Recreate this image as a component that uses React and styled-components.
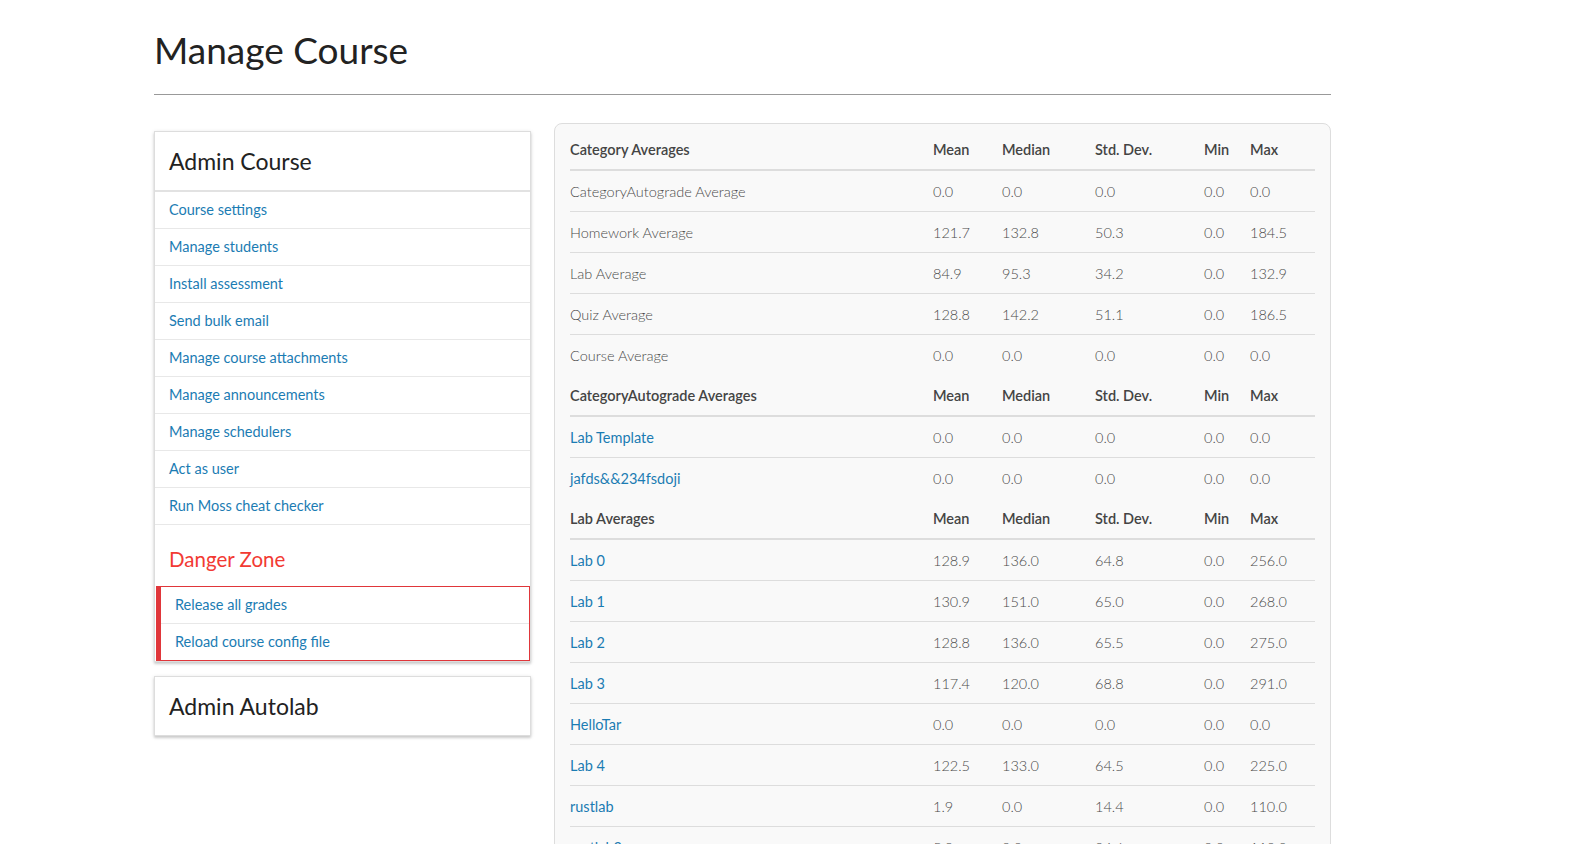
import React from 'react';
import styled, { createGlobalStyle } from 'styled-components';

const GlobalStyle = createGlobalStyle`
  body {
    margin: 0;
    background: #fff;
    font-family: Lato, "Liberation Sans", sans-serif;
    color: #444;
  }
`;

const Page = styled.div`
  width: 1177px;
  padding: 26px 0 40px 154px;
`;

const Title = styled.h1`
  margin: 0;
  font-size: 37px;
  font-weight: 400;
  color: #222;
  line-height: 48px;
  padding-bottom: 20px;
  border-bottom: 1px solid #999;
`;

const Columns = styled.div`
  display: grid;
  grid-template-columns: 377px 1fr;
  gap: 23px;
  margin-top: 28px;
  align-items: start;
`;

const Side = styled.div`
  display: flex;
  flex-direction: column;
  gap: 14px;
  margin-top: 8px;
`;

const Card = styled.div`
  background: #fff;
  border: 1px solid #ddd;
  box-shadow: 0 2px 2px 0 rgba(0, 0, 0, 0.12), 0 1px 4px 0 rgba(0, 0, 0, 0.14);
`;

const CardHeader = styled.div`
  font-size: 23px;
  color: #222;
  line-height: 58px;
  padding: 0 14px;
  border-bottom: ${(p) => (p.$last ? 'none' : '2px solid #e2e2e2')};
`;

const LinkList = styled.ul`
  margin: 0;
  padding: 0;
  list-style: none;
`;

const LinkItem = styled.li`
  border-bottom: 1px solid #e8e8e8;
  padding: 0 14px;
  line-height: 36px;
  font-size: 14.5px;

  a {
    color: #1b7cb3;
    text-decoration: none;
  }
`;

const DangerTitle = styled.div`
  color: #f23a33;
  font-size: 20.5px;
  padding: 22px 14px 15px;
`;

const DangerList = styled.ul`
  margin: 0 0 0 1px;
  padding: 0;
  list-style: none;
  border: 1px solid #e0363a;
  border-left: 5px solid #e0363a;
`;

const DangerItem = styled.li`
  padding: 0 14px;
  line-height: 36px;
  font-size: 14.5px;
  border-top: ${(p) => (p.$first ? 'none' : '1px solid #e8e8e8')};

  a {
    color: #1b7cb3;
    text-decoration: none;
  }
`;

const StatsCard = styled.div`
  background: #f9f9f9;
  border: 1px solid #ddd;
  border-radius: 8px;
  padding: 5px 15px 10px 15px;
`;

const Table = styled.table`
  width: 100%;
  border-collapse: collapse;
  font-size: 14.5px;
`;

const HeadCell = styled.th`
  text-align: left;
  font-weight: 600;
  color: #444;
  height: 40px;
  padding: 0;
  border-bottom: 2px solid #ddd;
`;

const Row = styled.tr`
  border-bottom: ${(p) => (p.$last ? 'none' : '1px solid #ddd')};
`;

const Cell = styled.td`
  height: 40px;
  padding: 0;
  color: #4a4a4a;
  font-weight: 300;

  a {
    color: #1b7cb3;
    font-weight: 400;
    text-decoration: none;
  }
`;

const adminLinks = [
  'Course settings',
  'Manage students',
  'Install assessment',
  'Send bulk email',
  'Manage course attachments',
  'Manage announcements',
  'Manage schedulers',
  'Act as user',
  'Run Moss cheat checker',
];

const sections = [
  {
    title: 'Category Averages',
    link: false,
    rows: [
      ['CategoryAutograde Average', '0.0', '0.0', '0.0', '0.0', '0.0'],
      ['Homework Average', '121.7', '132.8', '50.3', '0.0', '184.5'],
      ['Lab Average', '84.9', '95.3', '34.2', '0.0', '132.9'],
      ['Quiz Average', '128.8', '142.2', '51.1', '0.0', '186.5'],
      ['Course Average', '0.0', '0.0', '0.0', '0.0', '0.0'],
    ],
  },
  {
    title: 'CategoryAutograde Averages',
    link: true,
    rows: [
      ['Lab Template', '0.0', '0.0', '0.0', '0.0', '0.0'],
      ['jafds&&234fsdoji', '0.0', '0.0', '0.0', '0.0', '0.0'],
    ],
  },
  {
    title: 'Lab Averages',
    link: true,
    rows: [
      ['Lab 0', '128.9', '136.0', '64.8', '0.0', '256.0'],
      ['Lab 1', '130.9', '151.0', '65.0', '0.0', '268.0'],
      ['Lab 2', '128.8', '136.0', '65.5', '0.0', '275.0'],
      ['Lab 3', '117.4', '120.0', '68.8', '0.0', '291.0'],
      ['HelloTar', '0.0', '0.0', '0.0', '0.0', '0.0'],
      ['Lab 4', '122.5', '133.0', '64.5', '0.0', '225.0'],
      ['rustlab', '1.9', '0.0', '14.4', '0.0', '110.0'],
      ['rustlab2', '5.8', '0.0', '24.6', '0.0', '110.0'],
    ],
  },
];

const headers = ['Mean', 'Median', 'Std. Dev.', 'Min', 'Max'];

const App = () => (
  <>
    <GlobalStyle />
    <Page>
      <Title>Manage Course</Title>
      <Columns>
        <Side>
          <Card>
            <CardHeader>Admin Course</CardHeader>
            <LinkList>
              {adminLinks.map((l) => (
                <LinkItem key={l}>
                  <a href="#">{l}</a>
                </LinkItem>
              ))}
            </LinkList>
            <DangerTitle>Danger Zone</DangerTitle>
            <DangerList>
              <DangerItem $first>
                <a href="#">Release all grades</a>
              </DangerItem>
              <DangerItem>
                <a href="#">Reload course config file</a>
              </DangerItem>
            </DangerList>
          </Card>
          <Card>
            <CardHeader $last>Admin Autolab</CardHeader>
          </Card>
        </Side>
        <StatsCard>
          <Table>
            <colgroup>
              <col style={{ width: 363 }} />
              <col style={{ width: 69 }} />
              <col style={{ width: 93 }} />
              <col style={{ width: 109 }} />
              <col style={{ width: 46 }} />
              <col />
            </colgroup>
            {sections.map((s) => (
              <tbody key={s.title}>
                <tr>
                  <HeadCell>{s.title}</HeadCell>
                  {headers.map((h) => (
                    <HeadCell key={h}>{h}</HeadCell>
                  ))}
                </tr>
                {s.rows.map((r, i) => (
                  <Row key={r[0]} $last={i === s.rows.length - 1}>
                    <Cell>{s.link ? <a href="#">{r[0]}</a> : r[0]}</Cell>
                    {r.slice(1).map((v, j) => (
                      <Cell key={j}>{v}</Cell>
                    ))}
                  </Row>
                ))}
              </tbody>
            ))}
          </Table>
        </StatsCard>
      </Columns>
    </Page>
  </>
);

export default App;
